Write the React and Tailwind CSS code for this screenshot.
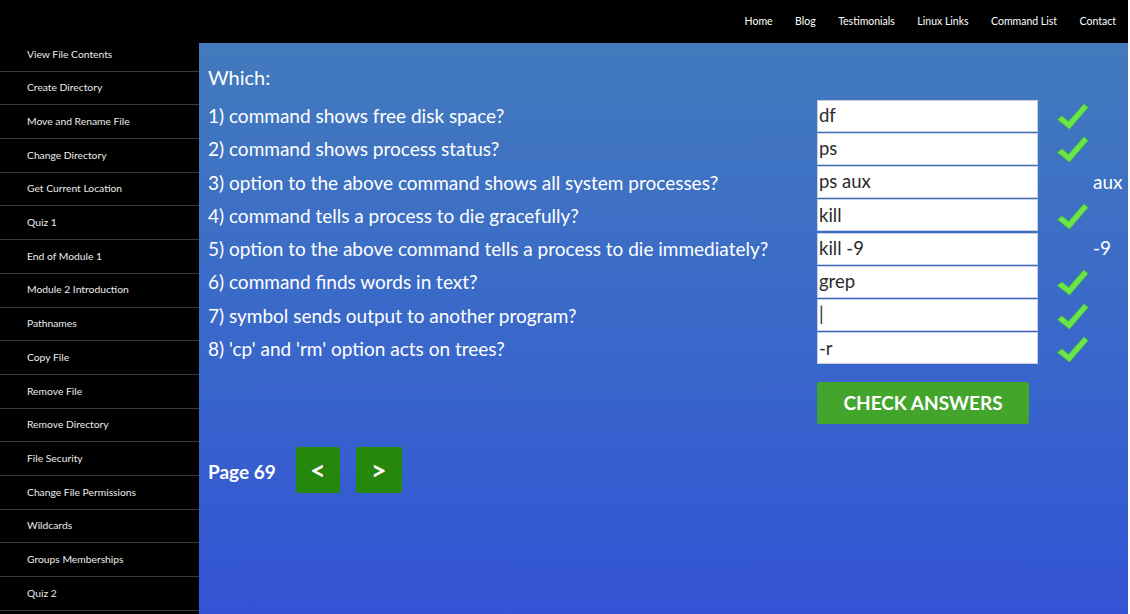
import React from 'react';

const navLinks = ['Home', 'Blog', 'Testimonials', 'Linux Links', 'Command List', 'Contact'];

const lessons = [
  'View File Contents',
  'Create Directory',
  'Move and Rename File',
  'Change Directory',
  'Get Current Location',
  'Quiz 1',
  'End of Module 1',
  'Module 2 Introduction',
  'Pathnames',
  'Copy File',
  'Remove File',
  'Remove Directory',
  'File Security',
  'Change File Permissions',
  'Wildcards',
  'Groups Memberships',
  'Quiz 2',
];

const questions = [
  { q: '1) command shows free disk space?', a: 'df', ok: true },
  { q: '2) command shows process status?', a: 'ps', ok: true },
  { q: '3) option to the above command shows all system processes?', a: 'ps aux', hint: 'aux' },
  { q: '4) command tells a process to die gracefully?', a: 'kill', ok: true },
  { q: '5) option to the above command tells a process to die immediately?', a: 'kill -9', hint: '-9' },
  { q: '6) command finds words in text?', a: 'grep', ok: true },
  { q: '7) symbol sends output to another program?', a: '|', ok: true },
  { q: "8) 'cp' and 'rm' option acts on trees?", a: '-r', ok: true },
];

function Tick() {
  return (
    <svg width="33" height="28" viewBox="0 0 33 28">
      <path
        d="M1.5 17.5 L6 14 L12.5 19.5 L28 2 L32 5.5 L13.5 27 Z"
        fill="#6be649"
        stroke="#4cc23a"
        strokeWidth="1"
        strokeLinejoin="round"
      />
    </svg>
  );
}

export default function App() {
  return (
    <div className="w-[1130px] h-[614px] overflow-hidden bg-white font-['Lato',sans-serif]">
      <div className="w-[1128px] h-full flex bg-black">
        <aside className="w-[199px] shrink-0 pt-[38px] bg-black">
          {lessons.map(item => (
            <div
              key={item}
              className="h-[33.7px] flex items-center pl-[27px] border-b border-[#3a3a3a] text-[10.3px] text-[#ececec]"
            >
              {item}
            </div>
          ))}
        </aside>

        <div className="flex-1 flex flex-col">
          <header className="h-[43px] shrink-0 flex items-center justify-end gap-[22.5px] pr-[12px] text-[10.5px] text-white">
            {navLinks.map(link => (
              <span key={link}>{link}</span>
            ))}
          </header>

          <main className="flex-1 bg-gradient-to-b from-[#437abd] to-[#3453d5] pl-[9px] pt-[20px] text-white">
            <h2 className="h-[28px] leading-[28px] text-[20px] mb-[8px]">Which:</h2>

            <div className="flex flex-col">
              {questions.map(row => (
                <div key={row.q} className="h-[33.25px] flex items-center">
                  <div className="w-[609px] text-[19px] leading-none">{row.q}</div>
                  <div className="w-[221px] h-[32px] bg-white border border-[#c8cfe0] flex items-center text-[18.5px] text-[#2b2b2b] pl-px">
                    {row.a}
                  </div>
                  <div className="flex-1 flex items-center h-full">
                    {row.ok ? (
                      <div className="ml-[18px] mt-[1px]">
                        <Tick />
                      </div>
                    ) : (
                      <span className="ml-[55px] text-[19px]">{row.hint}</span>
                    )}
                  </div>
                </div>
              ))}
            </div>

            <div className="flex mt-[17px] pl-[609px]">
              <button className="w-[212px] h-[42px] bg-[#43a52b] rounded-[2px] text-white font-bold text-[19px] uppercase">
                Check answers
              </button>
            </div>

            <div className="flex items-center mt-[23px]">
              <span className="font-bold text-[19px] mr-[20px] mt-[5px]">Page 69</span>
              <button className="w-[44px] h-[46px] bg-[#25880c] rounded-[2px] font-bold text-[27px] text-white">
                &lt;
              </button>
              <button className="w-[46px] h-[46px] ml-[16px] bg-[#25880c] rounded-[2px] font-bold text-[27px] text-white">
                &gt;
              </button>
            </div>
          </main>
        </div>
      </div>
    </div>
  );
}
